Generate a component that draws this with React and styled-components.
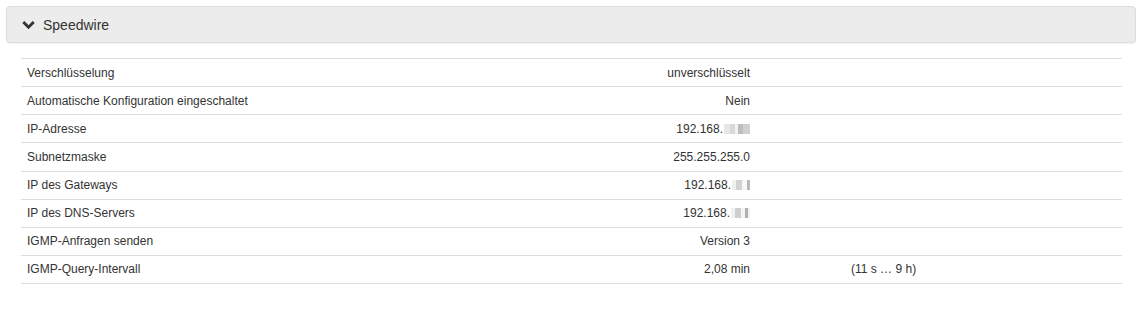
import React from 'react';
import styled, { createGlobalStyle } from 'styled-components';

const GlobalStyle = createGlobalStyle`
    body {
        margin: 0;
        background: #fff;
        font-family: "Liberation Sans", Arial, sans-serif;
        color: #333;
    }
`;

const Page = styled.div`
    padding: 6px 3px 0 6px;
`;

const PanelHeader = styled.div`
    display: flex;
    align-items: center;
    gap: 8px;
    height: 35px;
    padding: 0 15px;
    background: #ececec;
    border: 1px solid #dcdcdc;
    border-radius: 4px;
    box-shadow: 0 1px 1px rgba(0, 0, 0, 0.05);
    font-size: 14px;
    color: #333;
`;

const Body = styled.div`
    padding: 15px 14px 0 15px;
`;

const Table = styled.div`
    border-top: 1px solid #ddd;
`;

const Row = styled.div`
    display: grid;
    grid-template-columns: 455px 279px 96px 1fr;
    height: 27.125px;
    align-items: center;
    border-bottom: 1px solid #ddd;
    font-size: 12px;
    line-height: 1;
`;

const Label = styled.div`
    padding-left: 6px;
`;

const Value = styled.div`
    padding-right: 5px;
    display: flex;
    justify-content: flex-end;
    align-items: center;
`;

const Range = styled.div`
    grid-column: 4;
`;

const Blur = styled.span`
    display: inline-block;
    width: ${(p) => p.w || 6}px;
    height: 10px;
    background: ${(p) => p.c};
`;

const Chevron = () => (
    <svg width="13" height="10" viewBox="0 0 13 10">
        <path d="M1.3 2 L6.5 7.2 L11.7 2" fill="none" stroke="#333" strokeWidth="2.9" />
    </svg>
);

const Masked = ({ blocks }) => (
    <>
        192.168.
        <span style={{ display: 'inline-flex', marginLeft: 1 }}>
            {blocks.map((b, i) => (
                <Blur key={i} c={b[0]} w={b[1]} />
            ))}
        </span>
    </>
);

const rows = [
    ['Verschlüsselung', 'unverschlüsselt'],
    ['Automatische Konfiguration eingeschaltet', 'Nein'],
    [
        'IP-Adresse',
        <Masked
            blocks={[
                ['#e6e6e6', 6],
                ['#d8d8d8', 5],
                ['#f2f2f2', 3],
                ['#bdbdbd', 5],
                ['#d0d0d0', 7],
            ]}
        />,
    ],
    ['Subnetzmaske', '255.255.255.0'],
    [
        'IP des Gateways',
        <Masked
            blocks={[
                ['#f0f0f0', 4],
                ['#d2d2d2', 6],
                ['#f7f7f7', 5],
                ['#b8b8b8', 3],
            ]}
        />,
    ],
    [
        'IP des DNS-Servers',
        <Masked
            blocks={[
                ['#f0f0f0', 4],
                ['#cfcfcf', 6],
                ['#f4f4f4', 4],
                ['#b0b0b0', 3],
                ['#eef3f8', 2],
            ]}
        />,
    ],
    ['IGMP-Anfragen senden', 'Version 3'],
    ['IGMP-Query-Intervall', '2,08 min', '(11 s … 9 h)'],
];

const App = () => {
    return (
        <Page>
            <GlobalStyle />
            <PanelHeader>
                <Chevron />
                <span>Speedwire</span>
            </PanelHeader>
            <Body>
                <Table>
                    {rows.map((r, i) => (
                        <Row key={i}>
                            <Label>{r[0]}</Label>
                            <Value>{r[1]}</Value>
                            <div />
                            <Range>{r[2]}</Range>
                        </Row>
                    ))}
                </Table>
            </Body>
        </Page>
    );
};

export default App;
